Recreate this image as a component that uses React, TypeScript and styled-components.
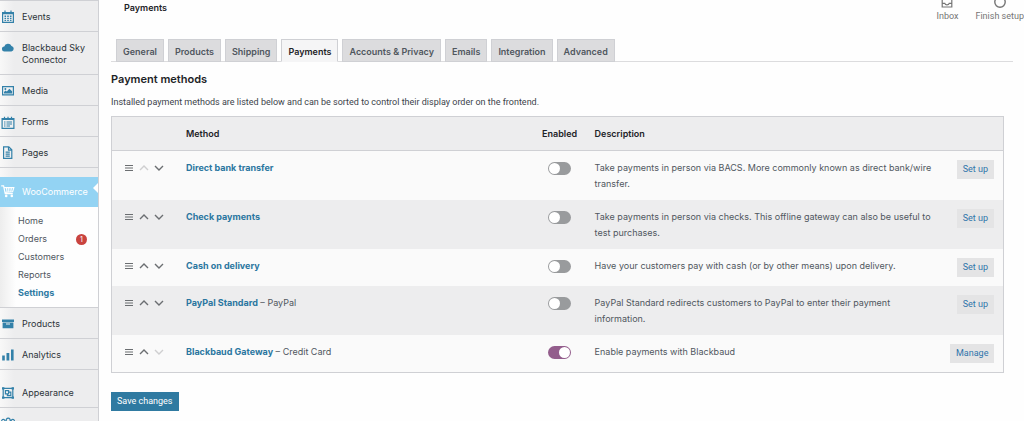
import React, { useState } from "react";
import styled, { createGlobalStyle, css } from "styled-components";

const GlobalStyle = createGlobalStyle`
  * { box-sizing: border-box; }
  html { scrollbar-width: none; }
  body {
    margin: 0;
    background: #fefefe;
    color: #50575e;
    font-family: Inter, "Liberation Sans", sans-serif;
    font-size: 9px;
    line-height: 16px;
  }
  button, input { font: inherit; margin: 0; }
  a { color: inherit; text-decoration: none; }
`;

const compactFont = css`
  font-family: Roboto, "Liberation Sans", sans-serif;
`;

const Shell = styled.div`
  display: grid;
  grid-template-columns: 99px minmax(0, 1fr);
  height: 100vh;
  overflow: hidden;
`;

const Sidebar = styled.nav`
  background: linear-gradient(90deg, #f8f8f8, #ededee 14px);
  border-top: 1px solid #cfd0d4;
  border-right: 1px solid #cfd0d4;
  overflow: hidden;
`;

const MenuLink = styled.a<{ $active?: boolean; $spaced?: boolean }>`
  position: relative;
  display: flex;
  align-items: flex-start;
  gap: 7px;
  min-height: 31px;
  padding: 10px 8px 8px 1px;
  border-bottom: 1px solid #cfd0d4;
  color: #2c3338;
  line-height: 12px;
  ${(p) => p.$spaced && css`padding-top: 17px;`}
  ${(p) =>
    p.$active &&
    css`
      margin-top: 9px;
      padding-top: 9px;
      padding-bottom: 9px;
      min-height: 30px;
      border-bottom: 0;
      background: #93d3f3;
      color: #fff;
      &::after {
        content: "";
        position: absolute;
        right: 0;
        top: 6px;
        border: 5px solid transparent;
        border-left-width: 0;
        border-right-color: #fefefe;
      }
    `}
`;

const MenuIcon = styled.svg`
  flex: none;
  width: 14px;
  height: 14px;
  margin: -1px 0;
  color: #3381a9;
  ${MenuLink}[aria-current] & { color: #fff; }
`;

const SubMenu = styled.div`
  padding: 5px 0;
  background: linear-gradient(90deg, #ededed, #fefefe 16px);
  border-bottom: 1px solid #cfd0d4;
`;

const SubLink = styled.a<{ $current?: boolean }>`
  display: flex;
  align-items: center;
  justify-content: space-between;
  height: 18px;
  padding: 0 11px 0 18px;
  color: ${(p) => (p.$current ? "#2f7ba4" : "#50575e")};
  font-weight: ${(p) => (p.$current ? 700 : 400)};
`;

const Badge = styled.span`
  width: 11px;
  height: 11px;
  border-radius: 50%;
  background: #c9433f;
  color: #fff;
  font-size: 7px;
  line-height: 11px;
  text-align: center;
`;

const Main = styled.main`
  padding: 0 20px 0 12px;
`;

const TopBar = styled.header`
  display: flex;
  justify-content: space-between;
  height: 39px;
  margin-right: -20px;
  padding-left: 13px;
`;

const PageTitle = styled.h1`
  margin: 0;
  color: #1d2327;
  font-size: 9px;
  font-weight: 600;
`;

const Activity = styled.div`
  display: flex;
  align-items: flex-start;
  gap: 17px;
`;

const ActivityButton = styled.button`
  ${compactFont}
  display: flex;
  flex-direction: column;
  align-items: center;
  margin-top: -6px;
  padding: 0;
  border: 0;
  background: none;
  color: #757575;
  white-space: nowrap;
  svg { width: 14px; height: 14px; }
`;

const Tabs = styled.nav`
  display: flex;
  gap: 4px;
  margin-right: -9px;
  padding-left: 5px;
  border-bottom: 1px solid #dcdcde;
`;

const Tab = styled.a<{ $current?: boolean }>`
  height: 23px;
  margin-bottom: -1px;
  padding: 0 6px;
  border: 1px solid #cfd0d4;
  background: #dcdcde;
  color: #50575e;
  font-weight: 600;
  line-height: 23px;
  white-space: nowrap;
  ${(p) =>
    p.$current &&
    css`
      border-bottom-color: #f5f5f6;
      background: #f5f5f6;
      color: #1d2327;
    `}
`;

const SectionTitle = styled.h2`
  margin: 9px 0 7px;
  color: #1d2327;
  font-size: 11px;
  font-weight: 600;
`;

const Intro = styled.p`
  ${compactFont}
  margin: 0 0 6px;
  color: #3c434a;
`;

const Gateways = styled.table`
  width: 100%;
  table-layout: fixed;
  border: 1px solid #cfd0d4;
  border-collapse: separate;
  border-spacing: 0;
  background: #fafafa;
  tbody tr:nth-child(even) { background: #ededee; }
`;

const Col = styled.col<{ $w?: string }>`
  width: ${(p) => p.$w ?? "auto"};
`;

const HeadCell = styled.th<{ $center?: boolean }>`
  height: 34px;
  padding: ${(p) => (p.$center ? "0" : "0 10px")};
  border-bottom: 1px solid #cfd0d4;
  background: #ededee;
  color: #1d2327;
  font-weight: 600;
  text-align: ${(p) => (p.$center ? "center" : "left")};
`;

const Cell = styled.td<{ $align?: string }>`
  padding: ${(p) => (p.$align === "center" ? "9px 0 8px" : "9px 0 8px 10px")};
  text-align: ${(p) => p.$align ?? "left"};
  vertical-align: top;
`;

const SortTools = styled.div`
  display: flex;
  align-items: center;
  gap: 5px;
  height: 16px;
  padding-left: 2px;
`;

const SortButton = styled.button`
  display: flex;
  padding: 0;
  border: 0;
  background: none;
  color: #6b6e71;
  svg { width: 10px; height: 10px; }
  &:disabled { color: #cfcfd0; }
`;

const MethodLink = styled.a`
  color: #2a76a0;
  font-weight: 700;
`;

const Toggle = styled.input`
  appearance: none;
  display: block;
  width: 23px;
  height: 13px;
  margin: 2px auto 0;
  border-radius: 7px;
  background: #999b9d;
  &::before {
    content: "";
    display: block;
    width: 11px;
    height: 11px;
    margin: 1px;
    border-radius: 50%;
    background: #fff;
  }
  &:checked { background: #935d8c; }
  &:checked::before { margin-left: 11px; }
`;

const ActionLink = styled.a`
  ${compactFont}
  display: inline-block;
  height: 19px;
  padding: 0 6px;
  background: #e4e4e5;
  color: #2f74ab;
  line-height: 19px;
  vertical-align: top;
`;

const ActionCell = styled(Cell)`
  padding: 9px;
  line-height: 19px;
  white-space: nowrap;
`;

const SaveButton = styled.button`
  ${compactFont}
  height: 19px;
  margin-top: 19px;
  padding: 0 6px;
  border: 0;
  background: #2f7aa1;
  color: #fff;
  line-height: 19px;
`;

const line = { fill: "none", stroke: "currentColor", strokeWidth: 1.2 };

const icons: Record<string, React.ReactNode> = {
  events: (
    <>
      <path {...line} d="M1.6 2.6h10.8v9.8H1.6zM1.6 3.6h10.8M4 .6v2.6M10 .6v2.6" />
      <path fill="currentColor" d="M3.5 5.6h1.6v1.3H3.5zM6.2 5.6h1.6v1.3H6.2zM8.9 5.6h1.6v1.3H8.9zM3.5 7.7h1.6V9H3.5zM6.2 7.7h1.6V9H6.2zM8.9 7.7h1.6V9H8.9zM3.5 9.8h1.6v1.1H3.5zM6.2 9.8h1.6v1.1H6.2zM8.9 9.8h1.6v1.1H8.9z" />
    </>
  ),
  cloud: (
    <path fill="currentColor" d="M3.6 10.5a2.5 2.5 0 0 1-.3-5A3.8 3.8 0 0 1 10.5 5a2.8 2.8 0 0 1-.1 5.5z" />
  ),
  media: (
    <>
      <path {...line} d="M1.6 2.6h10.8v8.2H1.6z" />
      <path fill="currentColor" d="M3 9.5V8l1.5-1.4 1.3 1L8.4 4.8l2.7 2.4v2.3z" />
      <circle cx="4.4" cy="5" r="1" fill="currentColor" />
    </>
  ),
  forms: (
    <>
      <path {...line} d="M1.1 3.6h11.8v9.8H1.1zM1.1 4.4h11.8M3.5 1.7v2M7 1.7v2M10.5 1.7v2" />
      <path {...line} strokeWidth={1} d="M3 7h1.5M5.5 7H11M3 9h1.500M5.500 9H11M3 11h1.500M5.500 11H9" />
    </>
  ),
  pages: (
    <path {...line} d="M2.6.8h5.2l3 3v8.6H2.600zM7.500.8v3.300h3.300M4.600 6.200h4.200M4.600 8.200h4.200M4.600 10.200h4.200" />
  ),
  cart: (
    <>
      <path {...line} d="M.2.9h2.4l1.6 7.700h7.600M3 2.600h9.800l-1.200 4.200-7.700.5M5.500 2.800l.6 4.200M7.800 2.800v4.100M10.300 2.800l-.5 4" />
      <circle cx="5.2" cy="10.9" r="1.3" fill="currentColor" />
      <circle cx="10.8" cy="10.9" r="1.3" fill="currentColor" />
    </>
  ),
  products: (
    <path fill="currentColor" d="M1 2.5h12V5H1zM1.6 5.6h10.8v5.600H1.600zM5 6.400v1.200h4V6.400z" fillRule="evenodd" />
  ),
  analytics: (
    <path fill="currentColor" d="M1.2 7.5h2.6v5H1.200zM5.500 5h2.800v7.500H5.500zM10 1.500h2.600v11H10z" />
  ),
  appearance: (
    <>
      <path {...line} d="M2.2 2.4h9.6v9.2H2.200zM4.400 4.600h3.200v3.200H4.400zM7.600 6.200h2.200v3.400H6.400V7.800" />
      <path fill="currentColor" d="M1 1.2h2.4v2.4H1zM10.600 1.200H13v2.400h-2.400zM1 10.400h2.400v2.400H1zM10.600 10.400H13v2.400h-2.400z" />
    </>
  ),
  users: (
    <path {...line} d="M.8 4.500a1.600 1.600 0 1 1 3 0M5.400 4a2 2 0 1 1 3.600 0M10.300 4.500a1.600 1.600 0 1 1 3 0M.6 9c0-2 4-2 4 0M5 9c0-3 4.500-3 4.500 0M9.800 9c0-2 4-2 4 0" />
  ),
};

interface MenuItemProps {
  icon: string;
  label: string;
  active?: boolean;
  spaced?: boolean;
  iconOnly?: boolean;
}

function MenuItem({ icon, label, active, spaced, iconOnly }: MenuItemProps) {
  return (
    <MenuLink
      href="#"
      $active={active}
      $spaced={spaced}
      aria-current={active ? "page" : undefined}
      aria-label={iconOnly ? label : undefined}
    >
      <MenuIcon viewBox="0 0 14 14" aria-hidden="true">{icons[icon]}</MenuIcon>
      {!iconOnly && label}
    </MenuLink>
  );
}

const tabs = ["General", "Products", "Shipping", "Payments", "Accounts & Privacy", "Emails", "Integration", "Advanced"];

const gateways = [
  { name: "Direct bank transfer", text: "Take payments in person via BACS. More commonly known as direct bank/wire transfer.", action: "Set up" },
  { name: "Check payments", text: "Take payments in person via checks. This offline gateway can also be useful to test purchases.", action: "Set up" },
  { name: "Cash on delivery", text: "Have your customers pay with cash (or by other means) upon delivery.", action: "Set up" },
  { name: "PayPal Standard", suffix: "PayPal", text: "PayPal Standard redirects customers to PayPal to enter their payment information.", action: "Set up" },
  { name: "Blackbaud Gateway", suffix: "Credit Card", text: "Enable payments with Blackbaud", action: "Manage" },
];

export default function App() {
  const [enabled, setEnabled] = useState<string[]>(["Blackbaud Gateway"]);
  const flip = (name: string) =>
    setEnabled((list) => (list.includes(name) ? list.filter((n) => n !== name) : [...list, name]));

  return (
    <>
      <GlobalStyle />
      <Shell>
        <Sidebar aria-label="Admin menu">
          <MenuItem icon="events" label="Events" />
          <MenuItem icon="cloud" label="Blackbaud Sky Connector" />
          <MenuItem icon="media" label="Media" />
          <MenuItem icon="forms" label="Forms" />
          <MenuItem icon="pages" label="Pages" />
          <MenuItem icon="cart" label="WooCommerce" active />
          <SubMenu>
            <SubLink href="#">Home</SubLink>
            <SubLink href="#">Orders <Badge>1</Badge></SubLink>
            <SubLink href="#">Customers</SubLink>
            <SubLink href="#">Reports</SubLink>
            <SubLink href="#" $current>Settings</SubLink>
          </SubMenu>
          <MenuItem icon="products" label="Products" />
          <MenuItem icon="analytics" label="Analytics" />
          <MenuItem icon="appearance" label="Appearance" spaced />
          <MenuItem icon="users" label="Users" iconOnly />
        </Sidebar>
        <Main>
          <TopBar>
            <PageTitle>Payments</PageTitle>
            <Activity>
              <ActivityButton type="button">
                <svg viewBox="0 0 14 14" aria-hidden="true">
                  <path {...line} d="M2.2 2h9.600v11H2.200zM2.200 9.400h2.600c.6 2 3.800 2 4.400 0h2.600" />
                </svg>
                Inbox
              </ActivityButton>
              <ActivityButton type="button">
                <svg viewBox="0 0 14 14" aria-hidden="true">
                  <circle cx="7" cy="8" r="5.2" {...line} strokeWidth={1.4} />
                </svg>
                Finish setup
              </ActivityButton>
            </Activity>
          </TopBar>
          <Tabs aria-label="Settings sections">
            {tabs.map((t) => (
              <Tab key={t} href="#" $current={t === "Payments"}>{t}</Tab>
            ))}
          </Tabs>
          <SectionTitle>Payment methods</SectionTitle>
          <Intro>
            Installed payment methods are listed below and can be sorted to control their display order on the frontend.
          </Intro>
          <Gateways>
            <colgroup>
              <Col $w="64px" />
              <Col />
              <Col $w="50px" />
              <Col $w="40%" />
              <Col $w="62px" />
            </colgroup>
            <thead>
              <tr>
                <HeadCell />
                <HeadCell scope="col">Method</HeadCell>
                <HeadCell scope="col" $center>Enabled</HeadCell>
                <HeadCell scope="col">Description</HeadCell>
                <HeadCell />
              </tr>
            </thead>
            <tbody>
              {gateways.map((g, i) => (
                <tr key={g.name}>
                  <Cell>
                    <SortTools>
                      <SortButton type="button" aria-label={`Drag ${g.name}`}>
                        <svg viewBox="0 0 10 10"><path {...line} strokeWidth={1} d="M1 2.5h8M1 5h8M1 7.5h8" /></svg>
                      </SortButton>
                      <SortButton type="button" aria-label={`Move ${g.name} up`} disabled={i === 0}>
                        <svg viewBox="0 0 10 10"><path {...line} strokeWidth={1.4} d="M1 7l4-4 4 4" /></svg>
                      </SortButton>
                      <SortButton type="button" aria-label={`Move ${g.name} down`} disabled={i === gateways.length - 1}>
                        <svg viewBox="0 0 10 10"><path {...line} strokeWidth={1.4} d="M1 3l4 4 4-4" /></svg>
                      </SortButton>
                    </SortTools>
                  </Cell>
                  <Cell>
                    <MethodLink href="#">{g.name}</MethodLink>
                    {g.suffix && ` – ${g.suffix}`}
                  </Cell>
                  <Cell $align="center">
                    <Toggle
                      type="checkbox"
                      role="switch"
                      aria-label={`Enable ${g.name}`}
                      checked={enabled.includes(g.name)}
                      onChange={() => flip(g.name)}
                    />
                  </Cell>
                  <Cell>{g.text}</Cell>
                  <ActionCell $align="right">
                    <ActionLink href="#">{g.action}</ActionLink>
                  </ActionCell>
                </tr>
              ))}
            </tbody>
          </Gateways>
          <SaveButton type="button">Save changes</SaveButton>
        </Main>
      </Shell>
    </>
  );
}
